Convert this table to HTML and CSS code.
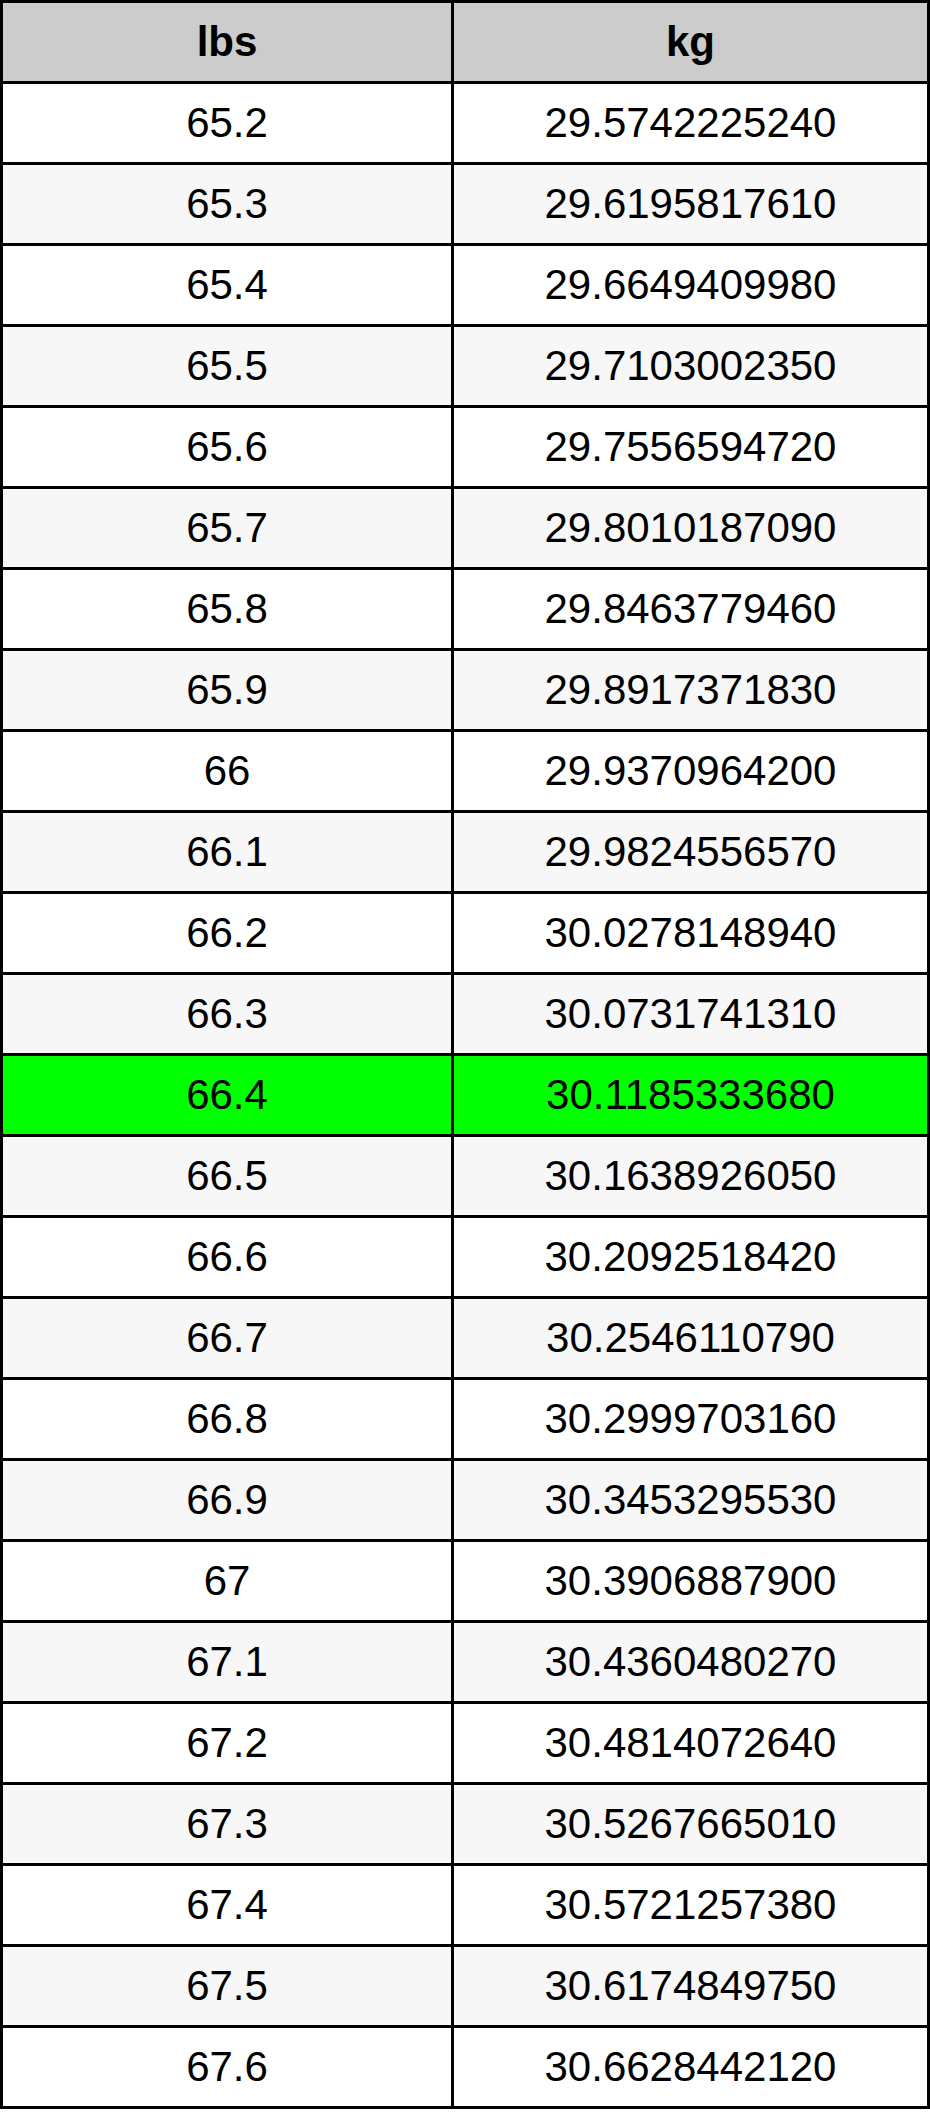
FILE: index.html
```html
<!DOCTYPE html>
<html>
<head>
<meta charset="utf-8">
<link rel="stylesheet" href="styles.css">
</head>
<body>
<table class="conv">
<thead>
<tr><th>lbs</th><th>kg</th></tr>
</thead>
<tbody>
<tr><td>65.2</td><td>29.5742225240</td></tr>
<tr><td>65.3</td><td>29.6195817610</td></tr>
<tr><td>65.4</td><td>29.6649409980</td></tr>
<tr><td>65.5</td><td>29.7103002350</td></tr>
<tr><td>65.6</td><td>29.7556594720</td></tr>
<tr><td>65.7</td><td>29.8010187090</td></tr>
<tr><td>65.8</td><td>29.8463779460</td></tr>
<tr><td>65.9</td><td>29.8917371830</td></tr>
<tr><td>66</td><td>29.9370964200</td></tr>
<tr><td>66.1</td><td>29.9824556570</td></tr>
<tr><td>66.2</td><td>30.0278148940</td></tr>
<tr><td>66.3</td><td>30.0731741310</td></tr>
<tr class="hl"><td>66.4</td><td>30.1185333680</td></tr>
<tr><td>66.5</td><td>30.1638926050</td></tr>
<tr><td>66.6</td><td>30.2092518420</td></tr>
<tr><td>66.7</td><td>30.2546110790</td></tr>
<tr><td>66.8</td><td>30.2999703160</td></tr>
<tr><td>66.9</td><td>30.3453295530</td></tr>
<tr><td>67</td><td>30.3906887900</td></tr>
<tr><td>67.1</td><td>30.4360480270</td></tr>
<tr><td>67.2</td><td>30.4814072640</td></tr>
<tr><td>67.3</td><td>30.5267665010</td></tr>
<tr><td>67.4</td><td>30.5721257380</td></tr>
<tr><td>67.5</td><td>30.6174849750</td></tr>
<tr><td>67.6</td><td>30.6628442120</td></tr>
</tbody>
</table>
</body>
</html>
```
FILE: styles.css
```css
html, body {
  margin: 0;
  padding: 0;
  background: #fff;
}
.conv {
  border-collapse: separate;
  border-spacing: 0;
  table-layout: fixed;
  width: 930px;
  border-top: 3px solid #000;
  border-left: 3px solid #000;
  font-family: "Liberation Sans", Arial, sans-serif;
  font-size: 42px;
  color: #000;
}
.conv th, .conv td {
  height: 78px;
  padding: 0;
  text-align: center;
  vertical-align: middle;
  border-right: 3px solid #000;
  border-bottom: 3px solid #000;
  box-sizing: content-box;
}
.conv th:first-child, .conv td:first-child {
  width: 448px;
}
.conv th {
  background: #ccc;
  font-weight: bold;
}
.conv tbody tr:nth-child(odd) td {
  background: #fff;
}
.conv tbody tr:nth-child(even) td {
  background: #f7f7f7;
}
.conv tbody tr.hl td {
  background: #00ff00;
}
```
